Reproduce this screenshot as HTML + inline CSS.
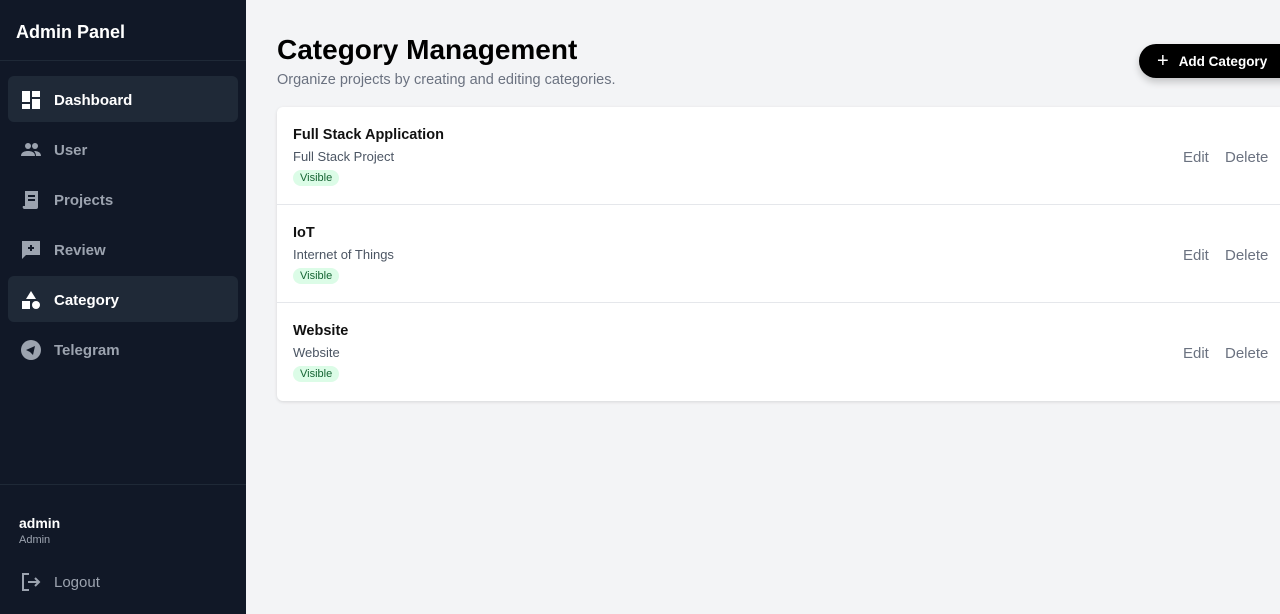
<!DOCTYPE html>
<html><head><style>
*{box-sizing:border-box;margin:0;padding:0}
body{width:1280px;height:614px;overflow:hidden;font-family:"Liberation Sans",sans-serif;background:#f3f4f6;position:relative}
.sb{position:absolute;left:0;top:0;width:246px;height:614px;background:#111827;color:#fff}
.sb h1{font-size:18px;font-weight:bold;position:absolute;left:16px;top:22px}
.hr{position:absolute;left:0;width:246px;height:1px;background:#1f2937}
.it{position:absolute;left:8px;width:230px;height:46px;border-radius:6px;display:flex;align-items:center;padding-left:13px;font-size:15px;font-weight:bold;color:#9ca3af;padding-top:2px}
.it.a{background:#1f2937;color:#fff}
.it svg{width:20px;height:20px;margin-right:13px}
.main{position:absolute;left:246px;top:0;right:0;bottom:0}
h2{position:absolute;left:31px;top:34px;font-size:28px;font-weight:bold;color:#000}
.sub{position:absolute;left:31px;top:72px;font-size:14.5px;color:#6b7280}
.btn{position:absolute;left:893px;top:44px;width:160px;height:34px;background:#000;border-radius:17px;color:#fff;font-size:13.5px;font-weight:bold;display:flex;align-items:center;padding-left:18px;box-shadow:0 4px 8px rgba(0,0,0,.2)}
.card{position:absolute;left:31px;top:107px;width:1010px;height:294px;background:#fff;border-radius:6px;box-shadow:0 1px 3px rgba(0,0,0,.12)}
.row{height:98px;border-bottom:1px solid #e5e7eb;position:relative}
.row:last-child{border:none}
.t{position:absolute;left:16px;top:20px;font-size:14.5px;font-weight:bold;color:#111}
.d{position:absolute;left:16px;top:42px;font-size:13px;color:#4b5563}
.v{position:absolute;left:16px;top:63px;background:#dcfce7;color:#166534;font-size:11px;padding:2px 7px;border-radius:9px}
.e{position:absolute;left:906px;top:42px;font-size:15px;color:#6b7280}
.x{position:absolute;left:948px;top:42px;font-size:15px;color:#6b7280}
</style></head><body>
<div class="sb">
<h1>Admin Panel</h1>
<div class="hr" style="top:60px"></div>
<div class="it a" style="top:76px"><svg viewBox="0 0 20 20"><path fill="#fff" d="M1 1h8v11H1zM11 1h8v6h-8zM11 9h8v10h-8zM1 14h8v5H1z"/></svg>Dashboard</div>
<div class="it" style="top:126px"><svg viewBox="0 0 20 20" fill="#9ca3af"><circle cx="7" cy="6" r="3"/><circle cx="14" cy="6" r="3"/><path d="M0 16c0-4 4-5 7-5s7 1 7 5zM15 16c0-2-1-4-2-5 3 0 7 1 7 5z"/></svg>User</div>
<div class="it" style="top:176px"><svg viewBox="0 0 20 20" fill="#9ca3af"><path d="M4 1h13v16a2 2 0 0 1-2 2H3a2 2 0 0 1-1-3h2zM7 5h7v2H7zM7 9h7v2H7z" fill-rule="evenodd"/></svg>Projects</div>
<div class="it" style="top:226px"><svg viewBox="0 0 20 20" fill="#9ca3af"><path d="M1 1h18v14H5l-4 4z"/><path fill="#111827" d="M9 5h2v2h2v2h-2v2H9V9H7V7h2z"/></svg>Review</div>
<div class="it a" style="top:276px"><svg viewBox="0 0 20 20" fill="#fff"><path d="M10 1l5 8H5z"/><rect x="1" y="11" width="8" height="8"/><circle cx="15" cy="15" r="4"/></svg>Category</div>
<div class="it" style="top:326px"><svg viewBox="0 0 20 20"><circle cx="10" cy="10" r="10" fill="#9ca3af"/><path d="M5 10l9-4-2 9-3-3z" fill="#111827"/></svg>Telegram</div>
<div class="hr" style="top:484px"></div>
<div style="position:absolute;left:19px;top:515px;font-size:14px;font-weight:bold">admin</div>
<div style="position:absolute;left:19px;top:534px;font-size:11px;color:#9ca3af">Admin</div>
<div class="it" style="top:558px;font-weight:normal;background:none"><svg viewBox="0 0 20 20" fill="none" stroke="#9ca3af" stroke-width="2"><path d="M8 2H2v16h6M7 10h11M14 6l4 4-4 4"/></svg>Logout</div>
</div>
<div class="main">
<h2>Category Management</h2>
<div class="sub">Organize projects by creating and editing categories.</div>
<div class="btn"><span style="font-size:20px;font-weight:normal;margin-right:10px">+</span>Add Category</div>
<div class="card">
<div class="row"><div class="t">Full Stack Application</div><div class="d">Full Stack Project</div><div class="v">Visible</div><div class="e">Edit</div><div class="x">Delete</div></div>
<div class="row"><div class="t">IoT</div><div class="d">Internet of Things</div><div class="v">Visible</div><div class="e">Edit</div><div class="x">Delete</div></div>
<div class="row"><div class="t">Website</div><div class="d">Website</div><div class="v">Visible</div><div class="e">Edit</div><div class="x">Delete</div></div>
</div>
</div>
</body></html>
